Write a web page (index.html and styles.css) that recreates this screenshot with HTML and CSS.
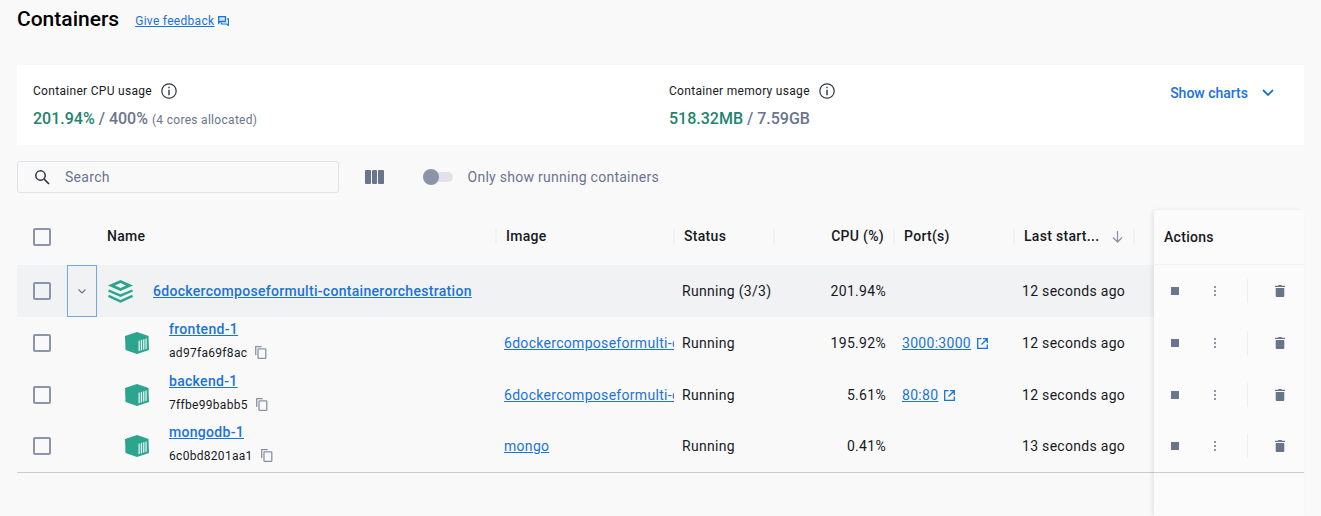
FILE: index.html
```html
<!DOCTYPE html>
<html>
<head>
  <meta name="viewport" content="width=device-width, initial-scale=1">
  <link rel="stylesheet" href="styles.css">
</head>
<body>
  <svg class="defs" width="0" height="0">
    <symbol id="box" viewBox="0 0 24 22">
      <path fill="#2ba58e" d="M12 0 23.500 4 24 18 12 22 .5 18 0 4z"/>
      <path fill="#e3f3ef" d="M13.500 8.800l1.300-.4v10.500l-1.300.4zM15.800 8.100l1.300-.4v10.500l-1.300.4zM18.100 7.400l1.300-.4v10.400l-1.300.4zM20.400 6.700l1.300-.4v10.400l-1.300.4z"/>
    </symbol>
    <symbol id="copy" viewBox="0 0 12 13">
      <path fill="none" stroke="#8993a8" stroke-width="1.300" d="M.7 9V.7h6"/>
      <rect x="3" y="2.900" width="7.800" height="9.400" rx=".6" fill="none" stroke="#8993a8" stroke-width="1.300"/>
    </symbol>
    <symbol id="open" viewBox="0 0 11 11">
      <path fill="none" stroke="#1a73d9" stroke-width="1.300" d="M4.500.7H.7v9.600h9.600V6.500M6 .7h4.300V5M10.300.7 4.500 6.500"/>
    </symbol>
    <symbol id="trash" viewBox="0 0 10 12">
      <path fill="#69758c" d="M3.500 0h3l.5.700h3V2H0V.7h3zM.7 2.900h8.600V11a1 1 0 0 1-1 1H1.700a1 1 0 0 1-1-1z"/>
    </symbol>
    <symbol id="info" viewBox="0 0 16 16">
      <circle cx="8" cy="8" r="7.200" fill="none" stroke="#2f3542" stroke-width="1.200"/>
      <path fill="#2f3542" d="M7.300 3.800h1.400v1.400H7.300zM7.300 6.800h1.400v5.400H7.300z"/>
    </symbol>
  </svg>

  <header class="top">
    <h1>Containers</h1>
    <a class="feedback" href="#">Give feedback</a>
    <svg class="feedback-icon" width="11" height="10" viewBox="0 0 11 10">
      <path fill="#cfe2f8" stroke="#1a73d9" stroke-width="1.300" d="M.7.700h6.800v4.800H2.500L.7 7z"/>
      <path fill="none" stroke="#1a73d9" stroke-width="1.200" d="M9 2.800h1.400V9.400L8.800 8H3.500V6.500"/>
    </svg>
  </header>

  <section class="usage">
    <div class="usage-item usage-cpu">
      <div class="usage-label">Container CPU usage <svg class="info" width="16" height="16"><use href="#info"/></svg></div>
      <div class="usage-value"><b>201.94%</b> / 400% <small>(4 cores allocated)</small></div>
    </div>
    <div class="usage-item usage-mem">
      <div class="usage-label">Container memory usage <svg class="info" width="16" height="16"><use href="#info"/></svg></div>
      <div class="usage-value"><b>518.32MB</b> / 7.59GB</div>
    </div>
    <a class="charts" href="#">Show charts
      <svg width="12" height="8" viewBox="0 0 12 8"><path fill="none" stroke="#1a73d9" stroke-width="1.800" d="M1 1l5 5 5-5"/></svg>
    </a>
  </section>

  <div class="toolbar">
    <div class="search">
      <svg width="16" height="16" viewBox="0 0 16 16"><circle cx="6.500" cy="6.500" r="4.700" fill="none" stroke="#2f3542" stroke-width="1.500"/><path stroke="#2f3542" stroke-width="1.700" d="M10 10l5 5"/></svg>
      <span>Search</span>
    </div>
    <div class="columns-btn"><i></i><i></i><i></i></div>
    <div class="switch"><i></i></div>
    <span class="switch-label">Only show running containers</span>
  </div>

  <div class="table">
    <div class="main">
      <div class="row head">
        <div class="c-check"><span class="check"></span></div>
        <div></div>
        <div class="c-name">Name</div>
        <div class="th">Image</div>
        <div class="th">Status</div>
        <div class="th right">CPU (%)</div>
        <div class="th">Port(s)</div>
        <div class="th last">Last start...
          <svg width="11" height="12" viewBox="0 0 11 12"><path fill="none" stroke="#8993a8" stroke-width="1.300" d="M5.500 0v11M1 6.500l4.500 4.500L10 6.500"/></svg>
        </div>
        <div class="th"></div>
      </div>

      <div class="row group">
        <div class="c-check"><span class="check"></span></div>
        <div class="expand"><svg width="8" height="5" viewBox="0 0 8 5"><path fill="none" stroke="#69758c" stroke-width="1.200" d="M.5.500 4 4 7.500.500"/></svg></div>
        <div class="c-stack">
          <svg width="25" height="23" viewBox="0 0 25 23">
            <path fill="#2ba58e" fill-rule="evenodd" d="M12.500 0 25 5.500 12.500 11 0 5.500zM12.500 3 7 5.500l5.500 2.500L18 5.500z"/>
            <path fill="none" stroke="#2ba58e" stroke-width="2.400" d="M.5 10.500l12 5.200 12-5.200M.5 15.800l12 5.600 12-5.600"/>
          </svg>
          <a class="link strong" href="#">6dockercomposeformulti-containerorchestration</a>
        </div>
        <div></div>
        <div class="td">Running (3/3)</div>
        <div class="td right">201.94%</div>
        <div class="td"></div>
        <div class="td">12 seconds ago</div>
        <div></div>
      </div>

      <div class="row item">
        <div class="c-check"><span class="check"></span></div>
        <div></div>
        <div class="c-box">
          <svg class="box" width="24" height="22"><use href="#box"/></svg>
          <div class="names">
            <a class="link strong" href="#">frontend-1</a>
            <div class="hash">ad97fa69f8ac <svg width="12" height="13"><use href="#copy"/></svg></div>
          </div>
        </div>
        <div class="td"><a class="link clip" href="#">6dockercomposeformulti-c</a></div>
        <div class="td">Running</div>
        <div class="td right">195.92%</div>
        <div class="td"><a class="link" href="#">3000:3000</a> <svg class="ext" width="11" height="11"><use href="#open"/></svg></div>
        <div class="td">12 seconds ago</div>
        <div></div>
      </div>

      <div class="row item">
        <div class="c-check"><span class="check"></span></div>
        <div></div>
        <div class="c-box">
          <svg class="box" width="24" height="22"><use href="#box"/></svg>
          <div class="names">
            <a class="link strong" href="#">backend-1</a>
            <div class="hash">7ffbe99babb5 <svg width="12" height="13"><use href="#copy"/></svg></div>
          </div>
        </div>
        <div class="td"><a class="link clip" href="#">6dockercomposeformulti-c</a></div>
        <div class="td">Running</div>
        <div class="td right">5.61%</div>
        <div class="td"><a class="link" href="#">80:80</a> <svg class="ext" width="11" height="11"><use href="#open"/></svg></div>
        <div class="td">12 seconds ago</div>
        <div></div>
      </div>

      <div class="row item short">
        <div class="c-check"><span class="check"></span></div>
        <div></div>
        <div class="c-box">
          <svg class="box" width="24" height="22"><use href="#box"/></svg>
          <div class="names">
            <a class="link strong" href="#">mongodb-1</a>
            <div class="hash">6c0bd8201aa1 <svg width="12" height="13"><use href="#copy"/></svg></div>
          </div>
        </div>
        <div class="td"><a class="link clip" href="#">mongo</a></div>
        <div class="td">Running</div>
        <div class="td right">0.41%</div>
        <div class="td"></div>
        <div class="td">13 seconds ago</div>
        <div></div>
      </div>
    </div>

    <div class="actions">
      <div class="actions-head">Actions</div>
      <div class="action-row"><i class="stop"></i><span class="dots"><i></i><i></i><i></i></span><i class="bar"></i><svg width="10" height="12"><use href="#trash"/></svg></div>
      <div class="action-row"><i class="stop"></i><span class="dots"><i></i><i></i><i></i></span><i class="bar"></i><svg width="10" height="12"><use href="#trash"/></svg></div>
      <div class="action-row"><i class="stop"></i><span class="dots"><i></i><i></i><i></i></span><i class="bar"></i><svg width="10" height="12"><use href="#trash"/></svg></div>
      <div class="action-row short"><i class="stop"></i><span class="dots"><i></i><i></i><i></i></span><i class="bar"></i><svg width="10" height="12"><use href="#trash"/></svg></div>
    </div>
  </div>
</body>
</html>
```

FILE: styles.css
```css
html, body {
  height: 100%;
}
body {
  margin: 0;
  padding: 0 17px;
  box-sizing: border-box;
  overflow: hidden;
  background-color: #f9f9fa;
  color: #17191e;
  font-family: Roboto, "Liberation Sans", sans-serif;
  font-size: 14px;
  letter-spacing: 0.3px;
}
.defs {
  position: absolute;
}
a {
  color: #1a73d9;
}

.top {
  display: flex;
  align-items: center;
  height: 65px;
  padding-bottom: 27px;
  box-sizing: border-box;
}
h1 {
  margin: 0 16px 0 0;
  font-size: 21px;
  font-weight: 500;
  letter-spacing: 0;
  color: #000;
}
.feedback {
  font-size: 12px;
  margin-top: 3px;
}
.feedback-icon {
  margin: 4px 0 0 4px;
}

.usage {
  display: flex;
  height: 80px;
  background-color: #fff;
  padding: 18px 30px 0 16px;
  box-sizing: border-box;
}
.usage-item {
  display: flex;
  flex-direction: column;
  gap: 10px;
}
.usage-cpu {
  width: 636px;
}
.usage-mem {
  flex: 1;
}
.usage-label {
  display: flex;
  align-items: center;
  height: 16px;
  font-size: 12px;
}
.info {
  margin-left: 9px;
}
.usage-value {
  font-size: 16px;
  font-weight: 500;
  letter-spacing: 0;
  color: #69758c;
}
.usage-value b {
  font-weight: 500;
  color: #22836f;
}
.usage-value small {
  font-size: 12px;
  font-weight: 400;
  letter-spacing: 0.3px;
}
.charts {
  display: flex;
  align-items: center;
  gap: 14px;
  height: 20px;
  font-size: 14px;
  font-weight: 500;
  letter-spacing: 0;
  text-decoration: none;
}

.toolbar {
  display: flex;
  align-items: center;
  height: 32px;
  margin-top: 16px;
}
.search {
  display: flex;
  align-items: center;
  gap: 15px;
  width: 322px;
  height: 32px;
  padding-left: 16px;
  box-sizing: border-box;
  border: 1px solid #dfe2e8;
  border-radius: 3px;
  color: #69758c;
}
.columns-btn {
  display: flex;
  gap: 1px;
  margin-left: 26px;
}
.columns-btn i {
  width: 5.500px;
  height: 14px;
  border-radius: 1px;
  background-color: #69758c;
}
.switch {
  position: relative;
  width: 30px;
  height: 10px;
  margin-left: 39px;
  border-radius: 5px;
  background-color: #dfe2e8;
}
.switch i {
  position: absolute;
  left: 0;
  top: -3px;
  width: 16px;
  height: 16px;
  border-radius: 50%;
  background-color: #8b94a8;
}
.switch-label {
  margin-left: 15px;
  letter-spacing: 0.27px;
  color: #69758c;
}

.table {
  display: flex;
  margin-top: 17px;
  height: 306px;
}
.main {
  width: 1137px;
}
.row {
  display: grid;
  grid-template-columns: 50px 30px 399px 178px 100px 120px 120px 120px 20px;
  align-items: center;
  height: 52px;
  box-sizing: border-box;
}
.head {
  height: 55px;
  padding-bottom: 2px;
  font-weight: 500;
}
.group {
  height: 52px;
  background-color: #f1f2f4;
}
.main .short, .actions .short {
  padding-bottom: 1px;
  border-bottom: 1px solid #c7ccd8;
}
.c-check {
  padding-left: 16px;
}
.check {
  display: block;
  width: 14px;
  height: 14px;
  border: 2px solid #8b94a8;
  border-radius: 2px;
}
.c-name {
  padding-left: 10px;
  line-height: 15px;
}
.th {
  height: 15px;
  line-height: 15px;
  margin-left: -1px;
  padding-left: 9px;
  border-left: 2px solid #f1f2f4;
}
.th.right {
  text-align: right;
  padding-right: 10px;
}
.th.last {
  display: flex;
  align-items: center;
  justify-content: space-between;
  padding-right: 11px;
}
.td {
  padding-left: 8px;
  white-space: nowrap;
}
.td.right {
  text-align: right;
  padding-right: 8px;
}
.clip {
  display: block;
  overflow: hidden;
  max-width: 170px;
}
.expand {
  display: flex;
  align-items: center;
  justify-content: center;
  align-self: stretch;
  box-sizing: border-box;
  border: 1px solid #6ea8e6;
}
.c-stack {
  display: flex;
  align-items: center;
  gap: 20px;
  padding-left: 11px;
}
.c-box {
  display: flex;
  align-items: center;
  gap: 20px;
  padding-left: 28px;
}
.names {
  display: flex;
  flex-direction: column;
  gap: 9px;
  margin-top: -6px;
}
.strong {
  font-weight: 500;
}
.hash {
  display: flex;
  align-items: center;
  gap: 8px;
  font-size: 12px;
}
.ext {
  margin-left: 2px;
  vertical-align: -1px;
}
.box {
  flex: none;
}

.actions {
  flex: 1;
  position: relative;
  border-radius: 3px 3px 0 0;
  background-color: #fbfbfc;
  box-shadow: -2px 0 4px rgba(0, 0, 0, 0.08);
}
.actions-head {
  display: flex;
  align-items: center;
  height: 55px;
  padding-left: 10px;
  box-sizing: border-box;
  border-bottom: 1px solid #f1f2f4;
  font-weight: 500;
}
.action-row {
  display: flex;
  align-items: center;
  height: 52px;
  padding-left: 17px;
  box-sizing: border-box;
}
.stop {
  width: 8px;
  height: 8px;
  background-color: #69758c;
}
.dots {
  display: flex;
  flex-direction: column;
  gap: 2px;
  margin-left: 35px;
}
.dots i {
  width: 2px;
  height: 2px;
  border-radius: 50%;
  background-color: #69758c;
}
.bar {
  width: 1px;
  height: 24px;
  margin-left: 31px;
  background-color: #eceef1;
}
.action-row svg {
  margin-left: 27px;
}
```
